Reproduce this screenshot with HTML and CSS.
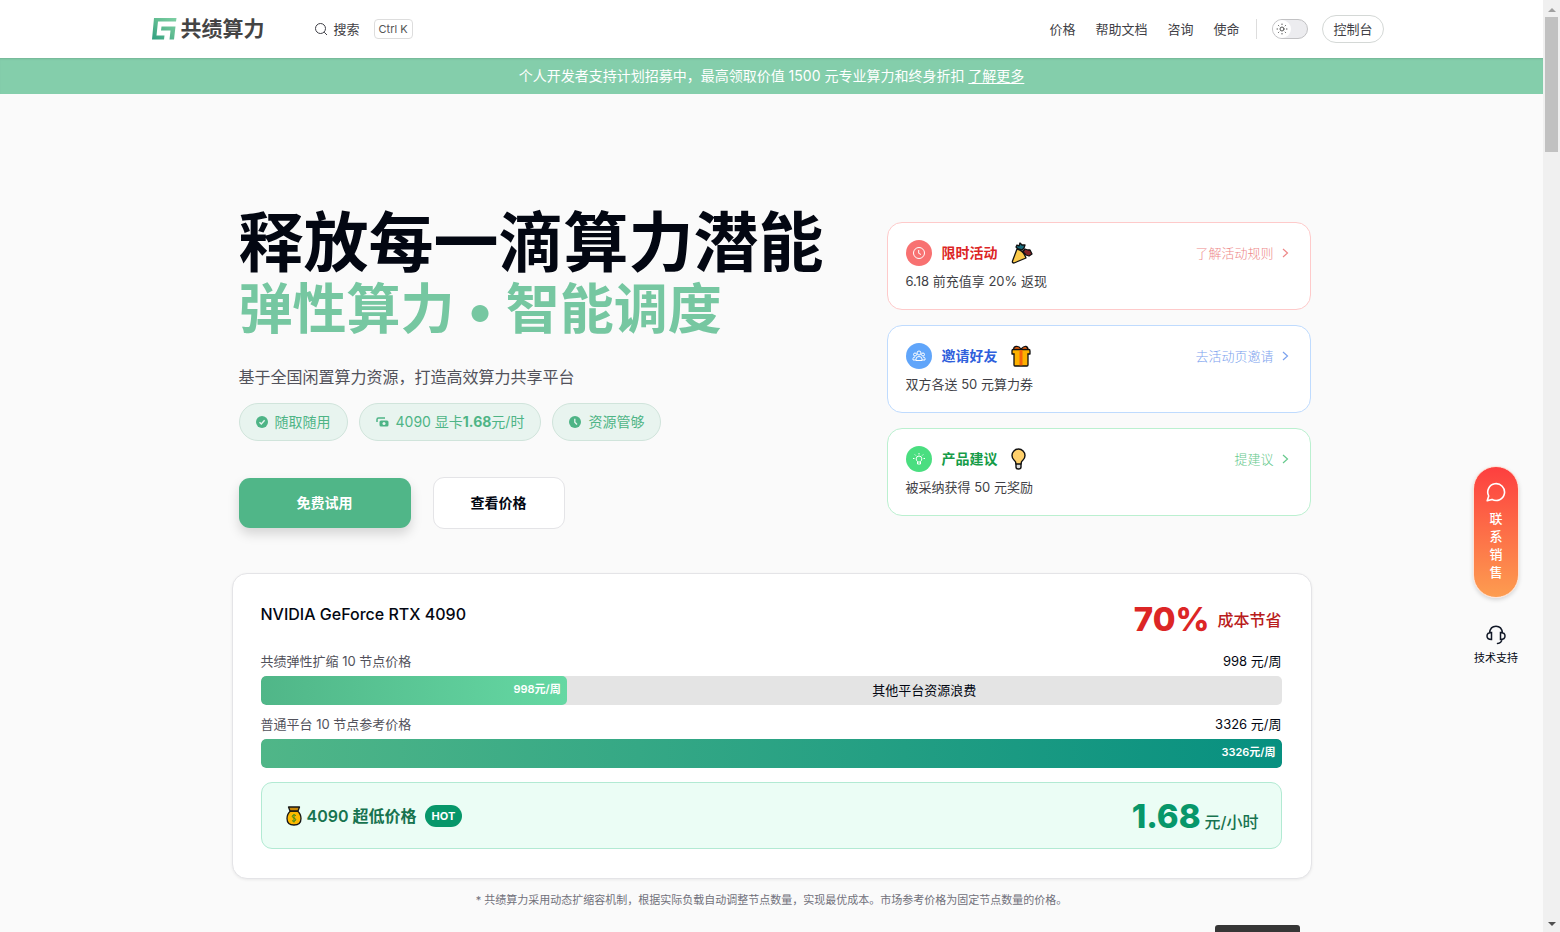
FILE: index.html
```html
<!DOCTYPE html>
<html lang="zh-CN">
<head>
<meta charset="utf-8">
<meta name="viewport" content="width=device-width, initial-scale=1">
<title>共绩算力</title>
<link rel="stylesheet" href="styles.css">
</head>
<body>
<div class="window">
  <div class="page">
    <header class="header">
      <div class="header-inner">
        <a class="logo" href="#">
          <svg width="25" height="22" viewBox="0 0 25 22" aria-hidden="true">
            <defs><linearGradient id="logo-fill" x1="0" y1="1" x2="1" y2="0"><stop offset="0" stop-color="#2f9f80"/><stop offset=".55" stop-color="#62bd92"/><stop offset="1" stop-color="#7fd0a4"/></linearGradient></defs>
            <path fill="url(#logo-fill)" d="M2 0H24.500L24 3.500H6L4.500 17.500H12.500L12 21.500H0ZM9.500 8.500H23.500L22 21.500H17.500L18.500 12.500H9Z"/>
          </svg>
          <span>共绩算力</span>
        </a>
        <button class="search" type="button">
          <svg width="14" height="14" viewBox="0 0 14 14" fill="none" stroke="currentColor" aria-hidden="true"><circle cx="6.500" cy="6.500" r="5"/><path d="M10.200 10.200 13 13"/></svg>
          <span>搜索</span>
          <kbd>Ctrl K</kbd>
        </button>
        <nav class="nav">
          <a href="#">价格</a>
          <a href="#">帮助文档</a>
          <a href="#">咨询</a>
          <a href="#">使命</a>
        </nav>
        <button class="theme" type="button" aria-label="切换主题">
          <span class="knob"><svg width="12" height="12" viewBox="0 0 12 12" fill="none" stroke="#555" stroke-linecap="round" aria-hidden="true"><circle cx="6" cy="6" r="2"/><path d="M6 1v.6M6 10.400v.6M1 6h.6M10.400 6h.6M2.500 2.500l.4.4M9.100 9.100l.4.4M2.500 9.500l.4-.4M9.100 2.900l.4-.4"/></svg></span>
        </button>
        <a class="console" href="#">控制台</a>
      </div>
    </header>

    <div class="banner">个人开发者支持计划招募中，最高领取价值 1500 元专业算力和终身折扣 <a href="#">了解更多</a></div>

    <main class="main">
      <section class="hero">
        <div class="intro">
          <h1><span class="line-main">释放每一滴算力潜能</span><span class="line-sub">弹性算力 • 智能调度</span></h1>
          <p class="lead">基于全国闲置算力资源，打造高效算力共享平台</p>
          <ul class="tags">
            <li><svg width="12" height="12" viewBox="0 0 12 12" aria-hidden="true"><circle cx="6" cy="6" r="6" fill="#4eb486"/><path d="M3.500 6.200 5.300 8l3.300-3.700" fill="none" stroke="#e8f4ef" stroke-width="1.400"/></svg><span>随取随用</span></li>
            <li><svg width="13" height="12" viewBox="0 0 13 12" aria-hidden="true"><path d="M1 6V3.500Q1 2 2.500 2H9" fill="none" stroke="#4eb486" stroke-width="1.500"/><rect x="3.500" y="4.500" width="9" height="6" rx="1.500" fill="#4eb486"/><circle cx="8" cy="7.500" r="1.500" fill="#e8f4ef"/></svg><span>4090 显卡<b>1.68</b>元/时</span></li>
            <li><svg width="12" height="12" viewBox="0 0 12 12" aria-hidden="true"><circle cx="6" cy="6" r="6" fill="#4eb486"/><path d="M5.800 2.700V6.200L8 8.500" fill="none" stroke="#e8f4ef" stroke-width="1.300"/></svg><span>资源管够</span></li>
          </ul>
          <div class="actions">
            <a class="btn btn-primary" href="#">免费试用</a>
            <a class="btn btn-plain" href="#">查看价格</a>
          </div>
        </div>

        <div class="offers">
          <article class="offer red">
            <div class="offer-head">
              <span class="badge"><svg width="14" height="14" viewBox="0 0 14 14" fill="none" stroke="#fff" aria-hidden="true"><circle cx="7" cy="7" r="5.500"/><path d="M6.700 4v3.300L9 8.500"/></svg></span>
              <h2>限时活动</h2>
              <svg width="22" height="22" viewBox="0 0 22 22" stroke="#111" stroke-width="1.300" stroke-linejoin="round" aria-hidden="true"><path d="M5 5 6 3 8 4 9 1 11 3 14 3 13 6 11 8 7 7Z" fill="#176b7c"/><path d="M12 10 14 7 17 8 19 8 21 12 18 14 15 13Z" fill="#842225"/><path d="M6 7Q12 8 15 16L3 21Q1 21 1.500 19Z" fill="#fccb4b"/><path d="m11 10 3-3" fill="none"/></svg>
              <a href="#">了解活动规则 <svg width="7" height="10" viewBox="0 0 7 10" fill="none" stroke="currentColor" stroke-width="1.200" aria-hidden="true"><path d="m1 1 4.500 4L1 9"/></svg></a>
            </div>
            <p>6.18 前充值享 20% 返现</p>
          </article>
          <article class="offer blue">
            <div class="offer-head">
              <span class="badge"><svg width="14" height="14" viewBox="0 0 14 14" fill="none" stroke="#fff" aria-hidden="true"><circle cx="7" cy="4" r="2"/><circle cx="3" cy="5.500" r="1.500"/><circle cx="11" cy="5.500" r="1.500"/><path d="M4 11.500V10Q4 7.500 7 7.500T10 10V11.500ZM4 11H1V9.500Q1 8 3 8M10 11h3V9.500Q13 8 11 8"/></svg></span>
              <h2>邀请好友</h2>
              <svg width="20" height="22" viewBox="0 0 20 22" stroke="#111" stroke-width="1.300" stroke-linejoin="round" aria-hidden="true"><path d="M10 4Q8 1 5 1.500T3 5H17Q17 2 15 1.500T10 4Z" fill="#f7630c"/><path d="M3 9H17V20Q17 21 16 21H4Q3 21 3 20Z" fill="#fdb100"/><path d="M2 4.500H18Q19 4.500 19 6V9H1V6Q1 4.500 2 4.500Z" fill="#fdb100"/><path d="M3.700 8H16.300V10H3.700Z" fill="#fdb100" stroke="none"/><path d="M8.500 5.200h3v15.100h-3Z" fill="#f7630c" stroke="none"/></svg>
              <a href="#">去活动页邀请 <svg width="7" height="10" viewBox="0 0 7 10" fill="none" stroke="currentColor" stroke-width="1.200" aria-hidden="true"><path d="m1 1 4.500 4L1 9"/></svg></a>
            </div>
            <p>双方各送 50 元算力券</p>
          </article>
          <article class="offer green">
            <div class="offer-head">
              <span class="badge"><svg width="14" height="14" viewBox="0 0 14 14" fill="none" stroke="#fff" aria-hidden="true"><path d="M5.500 9.500Q4.200 8.500 4.200 6.800a2.800 2.800 0 0 1 5.600 0Q9.800 8.500 8.500 9.500V12H5.500ZM5.500 10h3M7 1v1.500M1 6.500h1.500M11.500 6.500H13M2.800 2.500l1 1M11.200 2.500l-1 1"/></svg></span>
              <h2>产品建议</h2>
              <svg width="15" height="22" viewBox="0 0 15 22" stroke="#111" stroke-width="1.400" stroke-linejoin="round" aria-hidden="true"><path d="M5 15H10V19Q10 21 7.500 21T5 19Z" fill="#ddd"/><path d="M5 16Q5 13.500 3 12 1 10 1 7.500a6.500 6.500 0 0 1 13 0Q14 10 12 12 10 13.500 10 16Z" fill="#ffd06b"/></svg>
              <a href="#">提建议 <svg width="7" height="10" viewBox="0 0 7 10" fill="none" stroke="currentColor" stroke-width="1.200" aria-hidden="true"><path d="m1 1 4.500 4L1 9"/></svg></a>
            </div>
            <p>被采纳获得 50 元奖励</p>
          </article>
        </div>
      </section>

      <section class="pricing">
        <div class="pricing-head">
          <h2>NVIDIA GeForce RTX 4090</h2>
          <p class="saving"><strong>70%</strong><span>成本节省</span></p>
        </div>
        <div class="row-label"><span>共绩弹性扩缩 10 节点价格</span><b>998 元/周</b></div>
        <div class="bar"><div class="fill fill-light" style="width:30%">998元/周</div><div class="waste">其他平台资源浪费</div></div>
        <div class="row-label"><span>普通平台 10 节点参考价格</span><b>3326 元/周</b></div>
        <div class="bar"><div class="fill fill-deep" style="width:100%">3326元/周</div></div>
        <div class="deal">
          <svg width="16" height="20" viewBox="0 0 16 20" stroke="#161616" stroke-width="1.300" stroke-linejoin="round" aria-hidden="true"><path d="M4.500 5Q1 8 1 12.500 1 19 8 19T15 12.500Q15 8 11.500 5Z" fill="#fdb900"/><path d="M2.500 1H13.500L12 5H4Z" fill="#c98708"/><path d="M10 9.500Q8 8.300 6.500 9.500T8 12t1.500 2.500Q8 16 6 14.700M8 8v8.500" fill="none" stroke="#438b18" stroke-width="1"/></svg>
          <h3>4090 超低价格</h3>
          <span class="hot">HOT</span>
          <p class="price"><strong>1.68</strong><span>元/小时</span></p>
        </div>
      </section>
      <p class="note">* 共绩算力采用动态扩缩容机制，根据实际负载自动调整节点数量，实现最优成本。市场参考价格为固定节点数量的价格。</p>
    </main>

    <aside class="floating">
      <button class="sales" type="button">
        <svg width="20" height="20" viewBox="0 0 20 20" fill="none" stroke="#fff" stroke-width="1.600" stroke-linejoin="round" aria-hidden="true"><path d="M1.200 18.800 2.700 14A8.400 8.400 0 1 1 6 17.400Z"/></svg>
        <span>联系销售</span>
      </button>
      <a class="support" href="#">
        <svg width="20" height="20" viewBox="0 0 20 20" fill="none" stroke="#111827" stroke-width="1.500" stroke-linecap="round" aria-hidden="true"><path d="M3.500 8C4 3.500 6.500 1.200 10 1.200S16 3.500 16.500 8M5.500 7.500v7Q1 14.500 1 11T5.500 7.500ZM14.500 7.500v7Q19 14.500 19 11T14.500 7.500ZM16 14.500Q15.500 18 11.500 18.500"/></svg>
        <span>技术支持</span>
      </a>
    </aside>
    <div class="peek"></div>
  </div>
  <div class="scroll-track" aria-hidden="true"><i class="arrow-up"></i><i class="thumb"></i><i class="arrow-down"></i></div>
</div>
</body>
</html>
```
FILE: styles.css
```css
* { box-sizing: border-box; }
body, h1, h2, h3, p, ul { margin: 0; padding: 0; }
body {
  background: #fafafa;
  color: #030712;
  font-family: Inter, "Noto Sans CJK SC", sans-serif;
  font-size: 13px;
  line-height: 20px;
}
a { color: inherit; text-decoration: none; }
button { padding: 0; border: 0; background: none; color: inherit; font: inherit; }
svg { display: block; flex: none; }

.window { display: flex; height: 100vh; overflow: hidden; }
.page { position: relative; flex: 1; min-width: 0; overflow: hidden; }

.header { background: #fff; }
.header-inner {
  display: flex;
  align-items: center;
  max-width: 1240px;
  height: 58px;
  margin: 0 auto;
  padding-right: 8px;
  color: #3f3f46;
}
.logo { display: flex; align-items: center; gap: 4px; color: #444; font-size: 21px; font-weight: 700; line-height: 30px; }
.search { display: flex; align-items: center; gap: 6px; margin-left: 49px; }
.search kbd {
  margin-left: 8px;
  padding: 0 4px;
  border: 1px solid #ddd;
  border-radius: 4px;
  color: #555;
  font-family: inherit;
  font-size: 11px;
  line-height: 18px;
}
.nav { display: flex; gap: 20px; margin-left: auto; padding-right: 17px; border-right: 1px solid #ddd; }
.theme { width: 36px; height: 20px; margin-left: 15px; border: 1px solid #c2c2c4; border-radius: 10px; background: #ececef; }
.knob { display: grid; place-items: center; width: 18px; height: 18px; border-radius: 9px; background: #fff; }
.console { margin-left: 14px; padding: 3px 10px; border: 1px solid #d4d8d6; border-radius: 14px; }

.banner { padding: 8px; background: #84ceab; box-shadow: inset 0 2px 2px -1px #74b596; color: #fff; font-size: 14px; line-height: 20px; text-align: center; }
.banner a { text-decoration: underline; text-underline-offset: 2px; }

.main { max-width: 1080px; margin: 0 auto; }
.hero { display: flex; justify-content: space-between; gap: 24px; padding: 114px 1px 0 7px; }
.line-main, .line-sub { display: block; font-weight: 700; white-space: nowrap; }
.line-main { font-size: 65px; line-height: 70px; }
.line-sub { color: #76c7a1; font-size: 54px; line-height: 64px; }
.lead { margin-top: 23px; color: #52525b; font-size: 16px; line-height: 24px; }
.tags { display: flex; gap: 11px; margin-top: 14px; list-style: none; }
.tags li {
  display: flex;
  align-items: center;
  gap: 7px;
  height: 38px;
  padding: 0 16px;
  border: 1px solid #d0e4db;
  border-radius: 19px;
  background: #e8f4ef;
  color: #4eb486;
  font-size: 14px;
}
.actions { display: flex; align-items: center; gap: 22px; margin-top: 36px; }
.btn { border-radius: 11px; font-size: 14px; font-weight: 700; line-height: 50px; text-align: center; }
.btn-primary { width: 172px; background: #50b688; box-shadow: 0 6px 12px rgba(0, 0, 0, .15); color: #fff; }
.btn-plain { width: 132px; border: 1px solid #e4e4e7; background: #fff; }

.offers { display: flex; flex-direction: column; gap: 15px; width: 424px; padding-top: 14px; }
.offer { height: 88px; padding: 17px 21px 0 18px; border: 1px solid; border-radius: 15px; background: #fff; }
.offer-head { display: flex; align-items: center; height: 26px; }
.badge { display: grid; place-items: center; width: 26px; height: 26px; border-radius: 13px; }
.offer h2 { margin: 0 13px 0 10px; font-size: 14px; font-weight: 700; }
.offer-head a { display: flex; align-items: center; gap: 8px; margin-left: auto; font-weight: 300; }
.offer p { margin-top: 6px; color: #3f3f46; line-height: 18px; }
.red { border-color: #fecaca; }
.red .badge { background: #f87171; }
.red h2 { color: #dc2626; }
.red a { color: #ee8888; }
.blue { border-color: #bfdbfe; }
.blue .badge { background: #60a5fa; }
.blue h2 { color: #2f5fdc; }
.blue a { color: #7ba2ee; }
.green { border-color: #bbf0d0; }
.green .badge { background: #4ade80; }
.green h2 { color: #169c48; }
.green a { color: #66c98c; }

.pricing { margin-top: 44px; padding: 28px 29px 29px 28px; border: 1px solid #e4e4e7; border-radius: 15px; background: #fff; box-shadow: 0 1px 3px rgba(0, 0, 0, .07); }
.pricing-head { display: flex; justify-content: space-between; height: 46px; }
.pricing h2 { padding-top: 2px; font-size: 16px; font-weight: 500; line-height: 20px; }
.saving { display: flex; gap: 8px; color: #b91c1c; font-size: 16px; font-weight: 500; line-height: 36px; }
.saving strong { color: #dc2626; font-size: 33px; font-weight: 800; line-height: 34px; }
.row-label { display: flex; justify-content: space-between; height: 28px; padding-top: 3px; color: #52525b; }
.row-label b { color: #030712; font-weight: 400; }
.bar { display: flex; height: 29px; margin-bottom: 6px; overflow: hidden; border-radius: 5px; background: #e4e4e4; }
.fill { padding-right: 6px; border-radius: 5px; color: #fff; font-size: 11px; font-weight: 600; line-height: 27px; text-align: right; }
.fill-light { background: linear-gradient(90deg, #50b688, #65d8a3); }
.fill-deep { background: linear-gradient(90deg, #50b688, #079080); }
.waste { flex: 1; line-height: 28px; text-align: center; }
.deal { display: flex; align-items: center; height: 67px; margin-top: 14px; padding: 0 22px 0 24px; border: 1px solid #b2ead3; border-radius: 11px; background: #ebfdf5; color: #17734f; }
.deal h3 { margin: 0 8px 0 5px; font-size: 16px; font-weight: 600; }
.hot { padding: 0 7px; border-radius: 11px; background: #07976a; color: #fff; font-size: 11px; font-weight: 700; line-height: 22px; }
.price { display: flex; align-items: baseline; gap: 4px; margin-left: auto; font-size: 16px; font-weight: 500; }
.price strong { color: #07976a; font-size: 33px; font-weight: 800; line-height: 36px; }
.note { margin-top: 11px; color: #71717a; font-size: 11px; text-align: center; }

.floating { position: absolute; top: 466px; right: 24px; display: flex; flex-direction: column; align-items: center; gap: 27px; }
.sales { display: flex; flex-direction: column; align-items: center; gap: 7px; width: 46px; height: 132px; padding-top: 15px; border: 1px solid #ffe3d6; border-radius: 23px; background: linear-gradient(#fd3f3f, #fd9d50); box-shadow: 0 2px 4px rgba(0, 0, 0, .15); color: #fff; font-weight: 500; line-height: 18px; }
.sales span { width: 13px; }
.support { display: flex; flex-direction: column; align-items: center; gap: 3px; font-size: 11px; }
.peek { position: absolute; right: 243px; bottom: 0; width: 85px; height: 7px; border-radius: 3px 3px 0 0; background: #363636; }

.scroll-track { display: flex; flex-direction: column; align-items: center; width: 17px; padding: 6px 0; background: #f0f0f0; }
.thumb { width: 13px; height: 135px; margin-top: 5px; background: #c1c1c1; }
.arrow-up, .arrow-down { border: 4px solid transparent; }
.arrow-up { border-top: 0; border-bottom: 4px solid #a0a0a0; margin-top: 2px; }
.arrow-down { border-bottom: 0; border-top: 4px solid #505050; margin-top: auto; }
```
